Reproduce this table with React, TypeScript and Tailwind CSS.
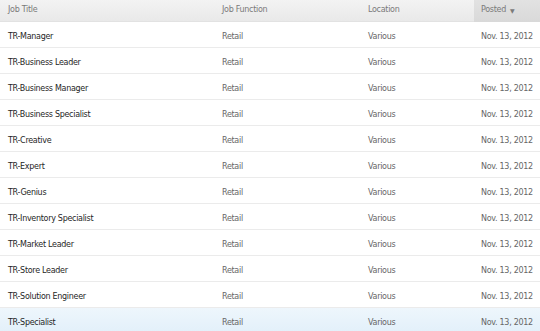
const jobs = [
  'TR-Manager',
  'TR-Business Leader',
  'TR-Business Manager',
  'TR-Business Specialist',
  'TR-Creative',
  'TR-Expert',
  'TR-Genius',
  'TR-Inventory Specialist',
  'TR-Market Leader',
  'TR-Store Leader',
  'TR-Solution Engineer',
  'TR-Specialist',
];

export default function App() {
  return (
    <div className="w-[540px] h-[331px] overflow-hidden bg-white font-['DejaVu_Sans',sans-serif] text-[8px] tracking-[-0.3px]">
      <div className="flex h-[22px] items-center border-b border-[#e2e2e2] bg-gradient-to-b from-[#f3f3f3] to-[#e9e9e9] pb-[1px] text-[#7a7a7a]">
        <div className="w-[222px] pl-[8px]">Job Title</div>
        <div className="w-[146px]">Job Function</div>
        <div className="w-[106px]">Location</div>
        <div className="-mb-[1px] flex h-[22px] flex-1 items-center bg-gradient-to-b from-[#e2e2e2] to-[#d9d9d9] pb-[1px] pl-[7px]">
          Posted <span className="ml-[4px] text-[6px]">▼</span>
        </div>
      </div>
      {jobs.map((job, i) => {
        const last = i === jobs.length - 1;
        return (
          <div
            key={job}
            className={`flex h-[26px] items-center border-b border-[#ebebeb] pt-[4px] ${
              last ? 'bg-gradient-to-b from-[#eef6fc] to-[#e2f0fa]' : ''
            }`}
          >
            <div className="w-[222px] pl-[8px] text-[#262626]">{job}</div>
            <div className="w-[146px] text-[#666]">Retail</div>
            <div className="w-[113px] text-[#666]">Various</div>
            <div className="flex-1 text-[#666]">Nov. 13, 2012</div>
          </div>
        );
      })}
    </div>
  );
}
